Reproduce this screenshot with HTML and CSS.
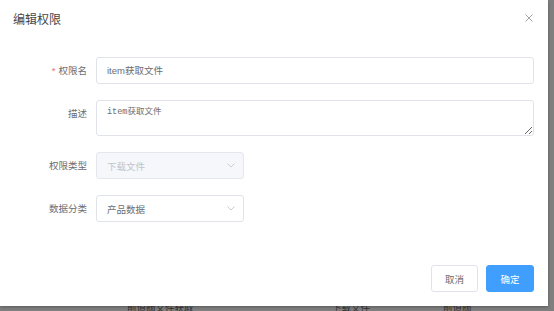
FILE: index.html
```html
<!DOCTYPE html>
<html lang="zh">
<head>
<meta charset="utf-8">
<link rel="stylesheet" href="styles.css">
</head>
<body>
<div class="page">
  <div class="topline"></div>
  <div class="table-row">
    <span class="cell c1">前道阀文件获取</span>
    <span class="cell c2">下载文件</span>
    <span class="cell c3">前道阀</span>
  </div>
</div>
<div class="dialog">
  <div class="dialog-header">
    <span class="dialog-title">编辑权限</span>
    <svg class="close" width="8" height="8" viewBox="0 0 8 8"><path d="M0.5 0.5L7.5 7.5M7.5 0.5L0.5 7.5" stroke="#a0a3a8" stroke-width="1"/></svg>
  </div>
  <div class="dialog-body">
    <div class="form-row">
      <label class="form-label"><span class="req">*</span>权限名</label>
      <div class="input">item获取文件</div>
    </div>
    <div class="form-row">
      <label class="form-label">描述</label>
      <textarea class="textarea">item获取文件</textarea>
    </div>
    <div class="form-row">
      <label class="form-label">权限类型</label>
      <div class="select disabled">
        <span>下载文件</span>
        <svg class="arrow" width="8" height="5" viewBox="0 0 8 5"><path d="M0.5 0.5L4 4L7.5 0.5" fill="none" stroke="#c8ccd3" stroke-width="1"/></svg>
      </div>
    </div>
    <div class="form-row">
      <label class="form-label">数据分类</label>
      <div class="select">
        <span>产品数据</span>
        <svg class="arrow" width="8" height="5" viewBox="0 0 8 5"><path d="M0.5 0.5L4 4L7.5 0.5" fill="none" stroke="#c8ccd3" stroke-width="1"/></svg>
      </div>
    </div>
  </div>
  <div class="dialog-footer">
    <button class="btn">取消</button>
    <button class="btn primary">确定</button>
  </div>
</div>
</body>
</html>
```
FILE: styles.css
```css
html, body {
  margin: 0;
  padding: 0;
  width: 554px;
  height: 311px;
  overflow: hidden;
}
body {
  background: #7f7f7f;
  font-family: "Liberation Sans", "Noto Sans CJK SC", sans-serif;
  position: relative;
}
.page {
  width: 554px;
  height: 311px;
  display: flex;
  flex-direction: column;
}
.topline {
  margin-top: 12px;
  height: 2px;
  background: #204f80;
}
.table-row {
  margin-top: 290px;
  display: flex;
  font-size: 9.5px;
  line-height: 12px;
  color: #333;
  padding-left: 127px;
}
.cell.c1 { width: 205px; }
.cell.c2 { width: 111px; }

.dialog {
  position: absolute;
  left: 0;
  top: 0;
  width: 548px;
  height: 306px;
  background: #fff;
  box-shadow: 0 1px 3px rgba(0,0,0,0.3);
  display: flex;
  flex-direction: column;
  box-sizing: border-box;
}
.dialog-header {
  padding: 12px 13px 0 13px;
  position: relative;
}
.dialog-title {
  font-size: 12px;
  line-height: 16px;
  color: #45464a;
  display: block;
}
.close {
  position: absolute;
  right: 15px;
  top: 14px;
}
.dialog-body {
  padding: 29px 14px 0 13px;
}
.form-row {
  display: flex;
  margin-bottom: 16px;
}
.form-label {
  width: 83px;
  box-sizing: border-box;
  padding-right: 9px;
  text-align: right;
  font-size: 9.5px;
  line-height: 27px;
  color: #6b6d72;
  flex-shrink: 0;
}
.req {
  color: #f56c6c;
  margin-right: 3px;
}
.input {
  flex: 1;
  height: 27px;
  box-sizing: border-box;
  border: 1px solid #e0e3e9;
  border-radius: 3px;
  padding: 0 10px;
  font-size: 9.5px;
  line-height: 25px;
  color: #6b6d72;
}
.textarea {
  flex: 1;
  height: 36px;
  box-sizing: border-box;
  border: 1px solid #e0e3e9;
  border-radius: 3px;
  padding: 4px 10px;
  margin: 0;
  font-family: "Liberation Mono", "Noto Sans CJK SC", monospace;
  font-size: 8.5px;
  line-height: 14px;
  color: #6b6d72;
  resize: vertical;
  outline: none;
}
.select {
  width: 148px;
  height: 27px;
  box-sizing: border-box;
  border: 1px solid #e0e3e9;
  border-radius: 3px;
  padding: 0 8px 0 10px;
  display: flex;
  align-items: center;
  justify-content: space-between;
  font-size: 9.5px;
  color: #6b6d72;
}
.select.disabled {
  background: #f5f7fa;
  border-color: #e4e7ed;
  color: #c0c4cc;
}
.dialog-footer {
  margin-top: auto;
  padding: 0 14px 14px 0;
  display: flex;
  justify-content: flex-end;
  gap: 8px;
}
.btn {
  height: 27px;
  width: 47px;
  box-sizing: border-box;
  border: 1px solid #e0e3e9;
  border-radius: 3px;
  background: #fff;
  color: #6b6d72;
  font-family: "Liberation Sans", "Noto Sans CJK SC", sans-serif;
  font-size: 9.5px;
  padding: 0;
}
.btn.primary {
  width: 48px;
  background: #409eff;
  border-color: #409eff;
  color: #fff;
}
```
